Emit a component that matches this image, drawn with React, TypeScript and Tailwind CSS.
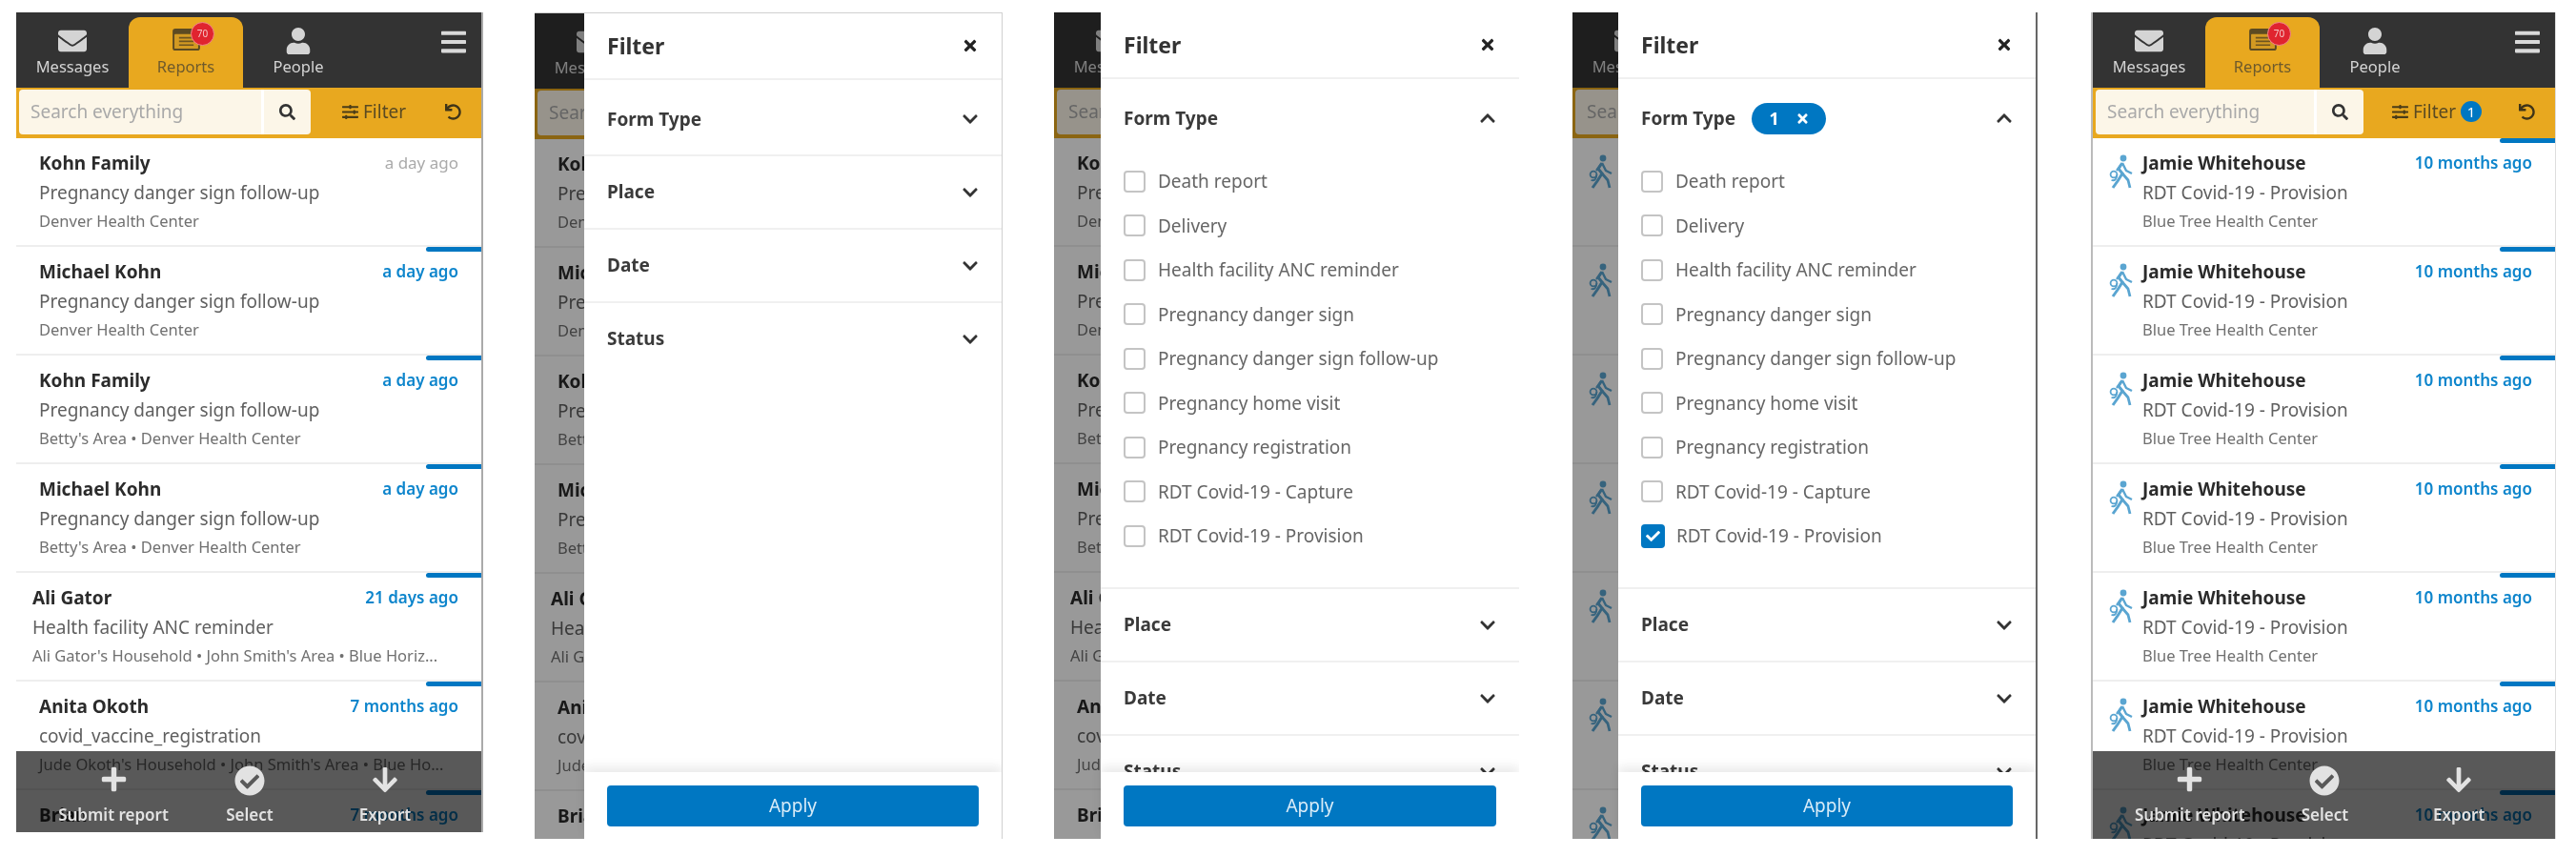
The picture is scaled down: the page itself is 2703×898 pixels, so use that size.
import React from 'react';
import {
  FaArrowDown,
  FaBars,
  FaCheck,
  FaCheckCircle,
  FaChevronDown,
  FaChevronUp,
  FaEnvelope,
  FaPlus,
  FaSearch,
  FaSlidersH,
  FaTimes,
  FaUndo,
  FaUser,
} from 'react-icons/fa';

type ReportRow = {
  name: string;
  form: string;
  place: string;
  time: string;
  read?: boolean;
  tight?: boolean;
  bar?: boolean;
};

const familyRows: ReportRow[] = [
  { name: 'Kohn Family', form: 'Pregnancy danger sign follow-up', place: 'Denver Health Center', time: 'a day ago', read: true },
  { name: 'Michael Kohn', form: 'Pregnancy danger sign follow-up', place: 'Denver Health Center', time: 'a day ago', bar: true },
  { name: 'Kohn Family', form: 'Pregnancy danger sign follow-up', place: "Betty's Area • Denver Health Center", time: 'a day ago', bar: true },
  { name: 'Michael Kohn', form: 'Pregnancy danger sign follow-up', place: "Betty's Area • Denver Health Center", time: 'a day ago', bar: true },
  { name: 'Ali Gator', form: 'Health facility ANC reminder', place: "Ali Gator's Household • John Smith's Area • Blue Horiz...", time: '21 days ago', tight: true, bar: true },
  { name: 'Anita Okoth', form: 'covid_vaccine_registration', place: "Jude Okoth's Household • John Smith's Area • Blue Ho...", time: '7 months ago', bar: true },
  { name: 'Brian', form: '', place: '', time: '7 months ago', bar: true },
];

const jamieRows: ReportRow[] = Array.from({ length: 7 }, () => ({
  name: 'Jamie Whitehouse',
  form: 'RDT Covid-19 - Provision',
  place: 'Blue Tree Health Center',
  time: '10 months ago',
  bar: true,
}));

const formTypes = [
  'Death report',
  'Delivery',
  'Health facility ANC reminder',
  'Pregnancy danger sign',
  'Pregnancy danger sign follow-up',
  'Pregnancy home visit',
  'Pregnancy registration',
  'RDT Covid-19 - Capture',
  'RDT Covid-19 - Provision',
];

const Walker = () => (
  <svg viewBox="0 0 26 36" className="w-[26px] h-[36px] text-[#5aa5d1]" fill="none" stroke="currentColor">
    <circle cx="15" cy="4" r="3.4" fill="currentColor" stroke="none" />
    <path d="M14 9 L10 15 L14 20 L9 28 L4 35" strokeWidth="3" strokeLinejoin="round" />
    <path d="M14 9 L18 17 L24 20" strokeWidth="2.4" strokeLinejoin="round" />
    <path d="M14 20 L20 27 L22 35" strokeWidth="2.8" strokeLinejoin="round" />
    <path d="M13 10 L8 17" strokeWidth="2.2" />
    <circle cx="5" cy="21" r="3.4" strokeWidth="1.8" />
    <path d="M8.4 21 C8.4 26 6 28 2.5 27" strokeWidth="1.8" />
  </svg>
);

const ReportsIcon = () => (
  <svg viewBox="0 0 30 24" className="w-[29px] h-[23px]">
    <rect x="0" y="0" width="30" height="24" rx="3" fill="#5c4a22" />
    <rect x="2" y="6" width="26" height="16" rx="1" fill="#d39a22" />
    <path d="M7 10 H23 M7 14 H23 M7 18 H23" stroke="#6f5520" strokeWidth="1.8" />
  </svg>
);

const Row = ({ row, icon }: { row: ReportRow; icon: boolean }) => (
  <div className={`relative h-[114px] shrink-0 border-b-2 border-[#eeeeee] bg-white pr-[24px] pt-[14px] flex ${row.tight || icon ? 'pl-[17px]' : 'pl-[24px]'}`}>
    {row.bar && <div className="absolute top-0 right-0 w-[58px] h-[5px] rounded-l-sm bg-[#0077c2]" />}
    {icon && (
      <div className="w-[35px] shrink-0 pt-[3px]">
        <Walker />
      </div>
    )}
    <div className="min-w-0 flex-1">
      <div className="flex justify-between items-center leading-[24px]">
        <span className="text-[19px] font-bold text-[#2b2b2b]">{row.name}</span>
        <span className={`text-[17px] ${row.read ? 'text-[#aaaaaa]' : 'font-semibold text-[#0d85cc]'}`}>{row.time}</span>
      </div>
      <div className="mt-[7px] text-[19px] leading-[24px] text-[#5f5f5f] whitespace-nowrap">{row.form}</div>
      <div className="mt-[7px] text-[16.5px] leading-[22px] text-[#707070] whitespace-nowrap">{row.place}</div>
    </div>
  </div>
);

const Screen = ({ rows, icon, filtered }: { rows: ReportRow[]; icon: boolean; filtered: boolean }) => (
  <div className="flex flex-col h-full">
    <div className="h-[79px] shrink-0 bg-[#333333] flex items-end">
      <div className="w-[118px] h-[74px] flex flex-col items-center text-[#d4d4d4]">
        <FaEnvelope className="w-[30px] h-[30px] mt-[10px]" />
        <span className="text-[16.5px] leading-[20px] mt-[2px]">Messages</span>
      </div>
      <div className="relative w-[120px] h-[74px] flex flex-col items-center rounded-t-[12px] bg-[#e8a81f] text-[#6e5a2c]">
        <div className="mt-[12px] h-[23px]">
          <ReportsIcon />
        </div>
        <span className="text-[16.5px] leading-[20px] mt-[7px]">Reports</span>
        <span className="absolute left-[65px] top-[5px] w-[25px] h-[25px] rounded-full bg-[#e0242f] border border-[#f08a8a] flex items-center justify-center text-[10px] text-[#f5c6c6]">70</span>
      </div>
      <div className="w-[116px] h-[74px] flex flex-col items-center text-[#d4d4d4]">
        <FaUser className="w-[26px] h-[28px] mt-[11px]" />
        <span className="text-[16.5px] leading-[20px] mt-[3px]">People</span>
      </div>
      <div className="flex-1 h-full flex items-start justify-end pr-[16px] pt-[16px] text-[#d9d9d9]">
        <FaBars className="w-[26px] h-[30px]" />
      </div>
    </div>
    <div className="h-[53px] shrink-0 bg-[#e8a81f] flex items-center pl-[3px] pb-[3px]">
      <div className={`h-[47px] flex rounded-[4px] bg-[#fcf6e8] ${filtered ? 'w-[281px]' : 'w-[306px]'}`}>
        <div className="flex-1 pl-[12px] text-[19px] leading-[47px] text-[#a9a9a9]">Search everything</div>
        <div className="w-[3px] bg-white" />
        <div className="w-[49px] flex items-center justify-center text-[#333333]">
          <FaSearch className="w-[17px] h-[17px]" />
        </div>
      </div>
      <div className={`flex items-center gap-[5px] text-[19px] text-[#5a4a22] ${filtered ? 'ml-[30px]' : 'ml-[33px]'}`}>
        <FaSlidersH className="w-[17px] h-[17px] text-[#4a3c18]" />
        <span>Filter</span>
        {filtered && (
          <span className="w-[22px] h-[22px] rounded-full bg-[#0077c2] text-white text-[15px] flex items-center justify-center">1</span>
        )}
      </div>
      <FaUndo className="ml-auto mr-[21px] w-[17px] h-[17px] text-[#3f3418]" />
    </div>
    <div className="flex-1 min-h-0 overflow-hidden flex flex-col">
      {rows.map((row, i) => (
        <Row key={i} row={row} icon={icon} />
      ))}
    </div>
  </div>
);

const ActionBar = ({ h }: { h: string }) => (
  <div className={`absolute left-0 right-0 bottom-0 bg-black/65 text-[#e2e2e2] ${h}`}>
    <div className="flex justify-between pt-[15px]">
      <div className="w-[204px] flex flex-col items-center">
        <FaPlus className="w-[29px] h-[29px]" />
        <span className="mt-[13px] text-[17px] leading-[20px] font-semibold whitespace-nowrap">Submit report</span>
      </div>
      <div className="w-[80px] flex flex-col items-center">
        <FaCheckCircle className="w-[32px] h-[32px]" />
        <span className="mt-[10px] text-[17px] leading-[20px] font-semibold">Select</span>
      </div>
      <div className="w-[202px] flex flex-col items-center">
        <FaArrowDown className="w-[30px] h-[30px]" />
        <span className="mt-[12px] text-[17px] leading-[20px] font-semibold">Export</span>
      </div>
    </div>
  </div>
);

const SectionHeader = ({ label, open, count, first }: { label: string; open?: boolean; count?: boolean; first?: boolean }) => (
  <div className={`flex items-center pl-[24px] pr-[24px] shrink-0 ${first ? 'pt-[4px] h-[78px]' : 'h-[75px]'}`}>
    <span className="text-[19px] font-bold text-[#3a3a3a]">{label}</span>
    {count && (
      <span className="ml-[17px] w-[78px] h-[33px] rounded-full bg-[#0077c2] text-white flex items-center justify-center gap-[18px] text-[18px] font-bold">
        1
        <FaTimes className="w-[13px] h-[15px]" />
      </span>
    )}
    <span className="ml-auto text-[#333333]">
      {open ? <FaChevronUp className="w-[18px] h-[18px]" /> : <FaChevronDown className="w-[18px] h-[18px]" />}
    </span>
  </div>
);

const Drawer = ({ open, checked, left }: { open: boolean; checked: boolean; left: string }) => (
  <div className={`absolute top-0 right-0 bottom-0 bg-white flex flex-col ${left}`}>
    <div className="h-[70px] shrink-0 flex items-center justify-between pl-[24px] pr-[25px] border-b-2 border-[#f0f0f0]">
      <span className="text-[23px] font-bold text-[#333333]">Filter</span>
      <FaTimes className="w-[16px] h-[18px] text-[#222222]" />
    </div>
    <div className="flex-1 min-h-0 overflow-hidden flex flex-col">
      <div className="border-b-2 border-[#f0f0f0] shrink-0">
        <SectionHeader label="Form Type" open={open} count={checked} first />
        {open && (
          <div className="pl-[24px] h-[455px] pt-[6px]">
            {formTypes.map(label => {
              const on = checked && label === 'RDT Covid-19 - Provision';
              return (
                <div key={label} className="flex items-center h-[46.5px]">
                  {on ? (
                    <span className="w-[25px] h-[25px] rounded-[4px] bg-[#0077c2] flex items-center justify-center text-white">
                      <FaCheck className="w-[15px] h-[15px]" />
                    </span>
                  ) : (
                    <span className="w-[23px] h-[23px] rounded-[4px] border-2 border-[#c4c4c4]" />
                  )}
                  <span className={`text-[19px] text-[#666666] ${on ? 'ml-[12px]' : 'ml-[13px]'}`}>{label}</span>
                </div>
              );
            })}
          </div>
        )}
      </div>
      <div className="border-b-2 border-[#f0f0f0] shrink-0"><SectionHeader label="Place" /></div>
      <div className="border-b-2 border-[#f0f0f0] shrink-0"><SectionHeader label="Date" /></div>
      <SectionHeader label="Status" />
    </div>
    <div className="relative h-[70px] shrink-0 bg-white px-[24px] pt-[14px] shadow-[0_-6px_10px_rgba(0,0,0,0.08)]">
      <div className="h-[43px] rounded-[4px] bg-[#0077c2] text-[#d9ecf8] text-[19px] flex items-center justify-center">Apply</div>
    </div>
  </div>
);

const App: React.FC = () => {
  return (
    <div className="w-[2703px] h-[898px] bg-white flex items-start pt-[13px] overflow-hidden blur-[0.6px] font-['Noto_Sans',sans-serif]">
      <div className="relative ml-[17px] w-[490px] h-[860px] overflow-hidden border-r-2 border-[#aaaaaa]">
        <Screen rows={familyRows} icon={false} filtered={false} />
        <ActionBar h="h-[85px]" />
      </div>

      <div className="relative ml-[54px] w-[491px] h-[867px] overflow-hidden border-r border-t border-[#d0d0d0]">
        <Screen rows={familyRows} icon={false} filtered={false} />
        <div className="absolute inset-0 bg-black/40" />
        <Drawer open={false} checked={false} left="left-[52px]" />
      </div>

      <div className="relative ml-[54px] w-[488px] h-[867px] overflow-hidden">
        <Screen rows={familyRows} icon={false} filtered={false} />
        <div className="absolute inset-0 bg-black/40" />
        <Drawer open checked={false} left="left-[49px]" />
      </div>

      <div className="relative ml-[56px] w-[488px] h-[867px] overflow-hidden border-r-2 border-[#666666]">
        <Screen rows={jamieRows} icon filtered />
        <div className="absolute inset-0 bg-black/40" />
        <Drawer open checked left="left-[48px]" />
      </div>

      <div className="relative ml-[56px] w-[488px] h-[867px] overflow-hidden border-l-2 border-r border-l-[#bbbbbb] border-r-[#dddddd]">
        <Screen rows={jamieRows} icon filtered />
        <ActionBar h="h-[92px]" />
      </div>
    </div>
  );
};

export default App;
